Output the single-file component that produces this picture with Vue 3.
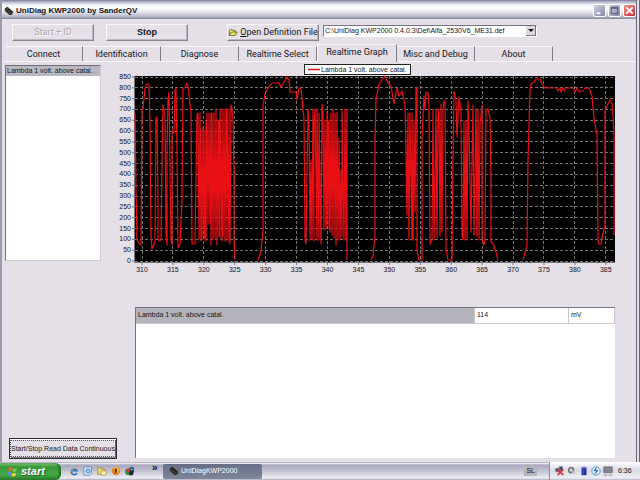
<script setup>
import { ref } from 'vue'

const tabs = ['Connect', 'Identification', 'Diagnose', 'Realtime Select', 'Realtime Graph', 'Misc and Debug', 'About']
const active = ref('Realtime Graph')
const files = ['C:\\UniDiag KWP2000 0.4.0.3\\Def\\Alfa_2530V6_ME31.def']
const file = ref(files[0])

const yTicks = Array.from({ length: 18 }, (_, i) => ({ label: 850 - i * 50, y: 77 + (i * 184) / 17 }))
const xTicks = Array.from({ length: 16 }, (_, i) => ({ label: 310 + i * 5, x: 142 + i * 30.92 }))

const trace = `135,113 136,190 137,240 140,245 141,245 142,110 143,109 145,88 147,84 149,84 150,125 151,235 152,249 155,242
156,118 157,117 158,200 158,238 159,241 161,240 162,160 163,105 165,115 166,235 167,245 167,150 168,100 169,92 170,170 171,240 172,245
172,130 174,133 175,90 176,88 177,150 178,248 180,244 182,200 183,88 185,88 187,83 188,86 190,105 191,112 192,244 195,244
197,115 198,113 199,240 200,113 201,241 201,130 202,238 203,126 204,237 204,130 205,240 206,122 206,241 207,113 208,224 209,113 210,224
211,113 211,245 212,113 213,240 214,113 215,238 216,109 217,245 218,120 219,236 219,120 220,238 220,109 222,241 222,109
223,236 224,109 225,241 226,109 227,240 227,109 229,241 229,109 230,244 231,105 232,109 233,120 234,170 234,240 235,260`

const trace2 = `258,260 261,252 263,230 263,105 265,94 268,88 272,83 279,83 281,87 284,82 287,77 289,80 290,92 296,92 297,100 299,88
301,88 303,110 304,118 305,240 306,244 308,109 309,120 310,240 311,160 312,240 313,109 314,241 314,125 315,109 317,240 317,109
319,240 319,113 321,244 322,104 323,113 324,230 325,120 326,228 327,113 327,225 328,122 329,229 329,120 330,232 331,113
332,235 333,109 334,238 335,113 336,245 337,112 338,240 339,138 340,240 341,170 342,236 342,109 344,240 345,109 346,240 347,109 347,260`

const trace3 = `371,260 373,256 375,235 375,140 376,100 379,84 382,80 385,76 388,83 391,86 394,104 397,88 399,96 402,91 405,105
406,150 407,215 408,113 409,240 410,113 411,180 412,240 412,113 413,240 414,120 415,212 416,88 417,88 417,250 419,260 422,260
422,140 424,96 425,110 426,92 428,93 429,105 430,244 432,240 433,109 434,240 436,109 437,238 438,118 439,109 440,236 441,104
442,232 443,109 444,101 445,101 446,250 448,260 452,260 453,160 454,92 456,100 457,137 459,97 461,110 462,235 463,240 464,121
465,240 466,120 467,240 468,101 469,130 471,232 472,160 473,105 474,235 476,109 477,236 478,109 479,240 480,125 482,105 482,240
484,245 485,238 486,109 488,109 490,118 491,180 491,242 494,245 494,248 496,252 498,260`

const trace4 = `523,260 527,245 528,160 530,90 531,84 534,82 536,79 540,79 542,84 545,88 557,88 558,91 560,88 561,92 563,88 564,91
566,88 573,88 575,92 577,88 579,92 583,91 585,88 589,88 592,96 594,118 597,135 598,240 599,244 601,244 602,238 605,225
605,110 608,104 610,100 612,104 613,115 614,135 614,235`

const rows = [{ name: 'Lambda 1 volt. above catal.', value: '114', unit: 'mV' }]
</script>

<template>
  <div class="screen">
    <main class="window">
      <header class="title">
        <svg class="chip" viewBox="0 0 12 12" aria-hidden="true">
          <path d="M1 3 4 1 11 7 10 10 7 11 1 6Z" fill="#24231c" />
          <path d="M1 6 4 4M3 8 6 6M5 10 9 7M5 2 4 4M8 4 6 6" stroke="#77745a" fill="none" />
        </svg>
        <h1>UniDiag KWP2000 by SanderQV</h1>
        <div class="caption">
          <button type="button" aria-label="Minimize"><svg viewBox="0 0 12 12"><path d="M3 9H7" stroke="#fff" stroke-width="2" /></svg></button>
          <button type="button" aria-label="Maximize"><svg viewBox="0 0 12 12"><path d="M2.500 2.500H9.500V9.500H2.500ZM2 3.500H10" stroke="#4c526b" fill="none" /></svg></button>
          <button type="button" class="close" aria-label="Close"><svg viewBox="0 0 12 12"><path d="M2.500 2.500 9.500 9.500M9.500 2.500 2.500 9.500" stroke="#fff" stroke-width="2" /></svg></button>
        </div>
      </header>

      <div class="toolbar">
        <button type="button" class="raised" disabled>Start + ID</button>
        <button type="button" class="raised stop">Stop</button>
        <button type="button" class="raised open">
          <svg viewBox="0 0 12 10" aria-hidden="true"><path d="M1.500 8.500V2.500L3 1.500H5L6 2.500H8.500V4.500M1.500 8.500 4 4.500H11L8.500 8.500Z" fill="#f3ec78" stroke="#5d5c18" /></svg>
          <span><u>O</u>pen Definition File</span>
        </button>
        <div class="combo">
          <select v-model="file" aria-label="Definition file">
            <option v-for="f in files" :key="f">{{ f }}</option>
          </select>
          <span class="arrow"></span>
        </div>
      </div>

      <nav class="tabs">
        <button v-for="t in tabs" :key="t" type="button" :class="{ on: active === t }" @click="active = t">{{ t }}</button>
      </nav>

      <div class="body">
        <aside>
          <ul class="list"><li>Lambda 1 volt. above catal.</li></ul>
          <button type="button" class="read"><span>Start/Stop Read Data Continuous</span></button>
        </aside>
        <section class="content">
          <svg class="chart" viewBox="105 62 531 216" role="img" aria-label="Lambda 1 volt. above catal.">
            <rect x="135" y="76" width="480" height="186" fill="#000" />
            <g class="grid">
              <line v-for="t in yTicks" :key="t.label" x1="135" x2="615" :y1="t.y" :y2="t.y" />
              <line v-for="t in xTicks" :key="t.label" y1="76" y2="262" :x1="t.x" :x2="t.x" />
            </g>
            <g class="ticks">
              <line v-for="t in yTicks" :key="t.label" x1="132" x2="135" :y1="t.y" :y2="t.y" />
              <line v-for="t in xTicks" :key="t.label" y1="262" y2="265" :x1="t.x" :x2="t.x" />
              <path d="M134.500 76V262.500H615" />
            </g>
            <g class="trace">
              <polyline :points="trace" />
              <polyline :points="trace2" />
              <polyline :points="trace3" />
              <polyline :points="trace4" />
            </g>
            <g class="labels">
              <text v-for="t in yTicks" :key="t.label" x="131" :y="t.y + 2" text-anchor="end">{{ t.label }}</text>
              <text v-for="t in xTicks" :key="t.label" :x="t.x" y="272" text-anchor="middle">{{ t.label }}</text>
            </g>
            <rect x="304.500" y="64.500" width="106" height="10" fill="#fff" stroke="#222" />
            <path d="M308 69.500H320" stroke="#d4151c" stroke-width="1.500" />
            <text x="321" y="72">Lambda 1 volt. above catal.</text>
          </svg>
          <div class="panel">
            <table>
              <tbody>
                <tr v-for="r in rows" :key="r.name">
                  <th scope="row">{{ r.name }}</th>
                  <td class="value">{{ r.value }}</td>
                  <td class="unit">{{ r.unit }}</td>
                </tr>
              </tbody>
            </table>
          </div>
        </section>
      </div>
    </main>

    <footer class="taskbar">
      <button type="button" class="start">
        <svg viewBox="0 0 12 12" aria-hidden="true">
          <path d="M2 2Q4 0 6 2L5 6Q3 4 1 6Z" fill="#ed6630" /><path d="M7 2Q9 4 11 2L10 6Q8 7 6 6Z" fill="#83c93c" />
          <path d="M1 7Q3 5 5 7L4 11Q2 9 0 11Z" fill="#548eea" /><path d="M6 7Q8 9 10 7L9 11Q7 12 5 11Z" fill="#f9d437" />
        </svg>
        <span>start</span>
      </button>
      <div class="quick">
        <svg viewBox="0 0 12 12"><path d="M9.500 8.500A3.500 3.500 0 1 1 9.500 5.500H3" fill="none" stroke="#2476d2" stroke-width="2" /><path d="M1 10Q1 6 10 1" fill="none" stroke="#e3b32d" /></svg>
        <svg viewBox="0 0 12 12"><path d="M3 1H10V9L8 11H1V3Z" fill="#deebf8" stroke="#4d83b5" /><circle cx="6" cy="6" r="2.500" fill="#9ccaf0" stroke="#3a79b5" /></svg>
        <svg viewBox="0 0 12 12"><path d="M1 2H5L6 4H10V10H1Z" fill="#f4dc7d" stroke="#a78935" /><path d="M5 6H11V11H5Z" fill="#fff6c2" stroke="#b49d53" /></svg>
        <svg viewBox="0 0 12 12"><circle cx="6" cy="6" r="5" fill="#e57e18" /><path d="M2 3Q6-1 10 4L8 9Q6 8 6 3" fill="#ffc239" /><path d="M6 3V8" stroke="#551b13" stroke-width="2" /></svg>
        <svg viewBox="0 0 12 12"><circle cx="4" cy="7" r="4" fill="#2b9641" /><circle cx="8" cy="4" r="3" fill="#26577e" /><path d="M5 6H11L9 11H5Z" fill="#182433" /><path d="M1 4 5 3 6 7 3 8Z" fill="#d83229" /><path d="M7 4H9" stroke="#fff" /></svg>
      </div>
      <span class="more">»</span>
      <button type="button" class="task">
        <svg class="chip" viewBox="0 0 12 12" aria-hidden="true"><path d="M1 3 4 1 11 7 10 10 7 11 1 6Z" fill="#24231c" /><path d="M1 6 4 4M3 8 6 6M5 10 9 7" stroke="#66644e" /></svg>
        <span>UniDiagKWP2000</span>
      </button>
      <span class="lang">SL</span>
      <div class="tray">
        <svg viewBox="0 0 12 12"><path d="M1 3H6V7H1ZM5 1H9V5H5Z" fill="#31406f" stroke="#697896" /><path d="M3 4 10 11M10 4 3 11" stroke="#e32d35" stroke-width="2" /></svg>
        <svg viewBox="0 0 12 12"><circle cx="5" cy="5" r="3.500" fill="#999" stroke="#555" /><path d="M3 5 6 3V7Z" fill="#eee" /><path d="M9 4V10L6 8" fill="#c9c4df" /></svg>
        <svg viewBox="0 0 12 12"><path d="M3 2H9V11H3Z" fill="#1731a3" /><ellipse cx="6" cy="2" rx="3" ry="1" fill="#6576c9" /><path d="M5 4V10" stroke="#5268ce" /></svg>
        <svg viewBox="0 0 12 12"><circle cx="6" cy="6" r="5" fill="#e3f2ff" stroke="#388bcb" /><path d="M7 1 3 6H6L4 11 9 5H6Z" fill="#1560b2" /></svg>
        <svg viewBox="0 0 12 12"><path d="M1 1H11V8H1Z" fill="#85878d" stroke="#686b72" /><path d="M1 11H5M7 11H11" stroke="#777" /></svg>
        <time>6:36</time>
      </div>
    </footer>
  </div>
</template>

<style>
body { margin: 0; background: #e5dfe7; }
</style>

<style scoped>
* { box-sizing: border-box; }
.screen { min-height: 100vh; display: flex; flex-direction: column; font: 7px/10px "Liberation Sans", Arial, sans-serif; color: #16151a; }
button { font: inherit; color: inherit; padding: 0; margin: 0; border: 0; background: none; white-space: nowrap; }
svg { display: block; flex: none; }
.window { flex: 1; display: flex; flex-direction: column; background: #e5dfe7; border: solid #9b9bb0; border-width: 0 4px 0 2px; border-right: 4px double #66647a; }
.title { height: 19px; display: flex; align-items: center; gap: 2px; padding: 2px 0 0 2px; background: linear-gradient(#7c7ca0 0, #b9b9cf 2px, #f4f4f9 5px, #fff 8px, #dcdce6 13px, #b4b4c8 17px, #9090a8 18px); }
.title h1 { flex: 1; margin: 0; font: bold 8px/12px "Liberation Sans", Arial, sans-serif; }
.chip { width: 10px; height: 10px; }
.caption { display: flex; gap: 2px; }
.caption button { width: 13px; height: 13px; border: 1px solid #fff; border-radius: 2px; background: linear-gradient(135deg, #d4d4e4, #8284a8); }
.caption svg { width: 11px; height: 11px; }
.caption .close { background: linear-gradient(135deg, #ed9588, #c52d36); }
.toolbar { display: flex; align-items: center; padding: 4px 0 3px 10px; height: 25px; }
.raised { width: 82px; height: 17px; border: 1px solid; border-color: #faf7fb #88848d #88848d #faf7fb; box-shadow: inset -1px -1px #bdb7c1; font: 9px/12px Roboto, "Liberation Sans", sans-serif; }
.raised:disabled { color: #aaa5ae; text-shadow: 1px 1px #fff; }
.stop { margin-left: 12px; font: bold 9px/12px "Liberation Sans", Arial, sans-serif; }
.open { display: flex; align-items: center; justify-content: center; gap: 2px; width: 92px; margin-left: 39px; }
.open svg { width: 10px; height: 9px; }
.combo { position: relative; margin-left: 4px; width: 214px; height: 12px; margin-bottom: 3px; }
select { display: block; width: 100%; height: 12px; padding: 0 12px 0 1px; border: 1px solid; border-color: #77737e #fff #fff #77737e; border-radius: 0; appearance: none; background: #fff; color: #16151a; font: 7px/10px "Liberation Sans", Arial, sans-serif; }
.arrow { position: absolute; right: 1px; top: 1px; width: 10px; height: 10px; display: grid; place-items: center; background: #ddd8df; border-right: 1px solid #77737e; border-bottom: 1px solid #77737e; pointer-events: none; }
.arrow::after { content: ""; border: solid transparent; border-width: 3px 3px 0; border-top-color: #111; }
.tabs { display: flex; height: 18px; align-items: flex-end; padding-left: 3px; border-bottom: 1px solid #f8f5f9; }
.tabs button { width: 78px; height: 15px; padding-bottom: 1px; border-top: 1px solid #f8f5f9; border-right: 1px solid #7f7b85; font: 9px/12px Roboto, "Liberation Sans", sans-serif; }
.tabs .on { width: 80px; height: 18px; margin-bottom: -1px; padding-bottom: 3px; background: #e5dfe7; border-left: 1px solid #fff; }
.body { flex: 1; display: grid; grid-template-columns: 96px 1fr; gap: 4px; padding-left: 3px; }
aside { display: flex; flex-direction: column; justify-content: space-between; padding: 3px 0 3px; }
.list { height: 196px; margin: 0; padding: 0; list-style: none; background: #fff; border: 1px solid; border-color: #716d78 #d0cad3 #d0cad3 #716d78; }
.list li { height: 10px; padding-left: 1px; line-height: 10px; background: #b9b7bf; white-space: nowrap; }
.read { align-self: flex-start; height: 21px; margin-left: 4px; padding: 1px 0; border: 1px solid #2a2830; box-shadow: inset 1px 1px #fff, inset -1px -1px #85818b; min-width: 106px; }
.read span { display: block; border: 1px dotted #55515a; line-height: 15px; }
.content { display: flex; flex-direction: column; min-width: 0; }
.chart { width: 100%; height: auto; }
.grid line { stroke: #757575; stroke-width: 1; stroke-dasharray: 3 2; shape-rendering: crispEdges; }
.ticks { stroke: #77737d; fill: none; }
.trace polyline { fill: none; stroke: #e81015; stroke-width: 1.2; stroke-linejoin: round; }
text { font: 7px "Liberation Sans", Arial, sans-serif; fill: #16151a; }
.panel { flex: 1; margin: 29px 21px 4px 30px; background: #fff; border-left: 1px solid #77747e; border-top: 1px solid #77747e; }
table { width: 100%; border-collapse: collapse; table-layout: fixed; }
th, td { height: 15px; padding: 0 2px 1px; text-align: left; font-weight: normal; border: solid #c9c5cc; border-width: 0 1px 1px 0; }
th { background: #b3b3bb; }
.value { width: 94px; }
.unit { width: 46px; }
.taskbar { height: 18px; display: flex; align-items: center; background: linear-gradient(#77778e 0, #fff 1px, #a6a6bd 3px, #c3c3d2 9px, #ededf3 16px, #aaaabd); }
.start { display: flex; align-items: center; gap: 3px; width: 61px; height: 17px; padding-left: 7px; border-radius: 0 6px 6px 0; background: linear-gradient(#81c774, #38963a 4px, #43a844 12px, #287b2c); color: #fff; font: italic bold 11px/14px "Liberation Sans", Arial, sans-serif; box-shadow: inset -2px 0 2px #28712c; text-shadow: 1px 1px 1px #245927; }
.start svg { width: 11px; height: 11px; }
.quick { display: flex; gap: 4px; margin-left: 8px; }
.quick svg, .tray svg { width: 10px; height: 10px; }
.more { margin: 0 0 6px 17px; font-weight: bold; font-size: 10px; width: 11px; }
.task { display: flex; align-items: center; gap: 2px; width: 99px; height: 15px; padding-left: 6px; background: linear-gradient(#666f83, #7e879a); border-radius: 2px; color: #fff; }
.lang { margin-left: auto; margin-right: 12px; padding: 0 2px; background: #b5b5be; }
.tray { display: flex; align-items: center; gap: 2px; align-self: stretch; width: 91px; padding-left: 5px; border-left: 1px solid #6e9a92; background: linear-gradient(#fff, #dadae5 8px, #eeeef4 16px, #b7b7c8); }
time { margin-left: 3px; }
</style>
